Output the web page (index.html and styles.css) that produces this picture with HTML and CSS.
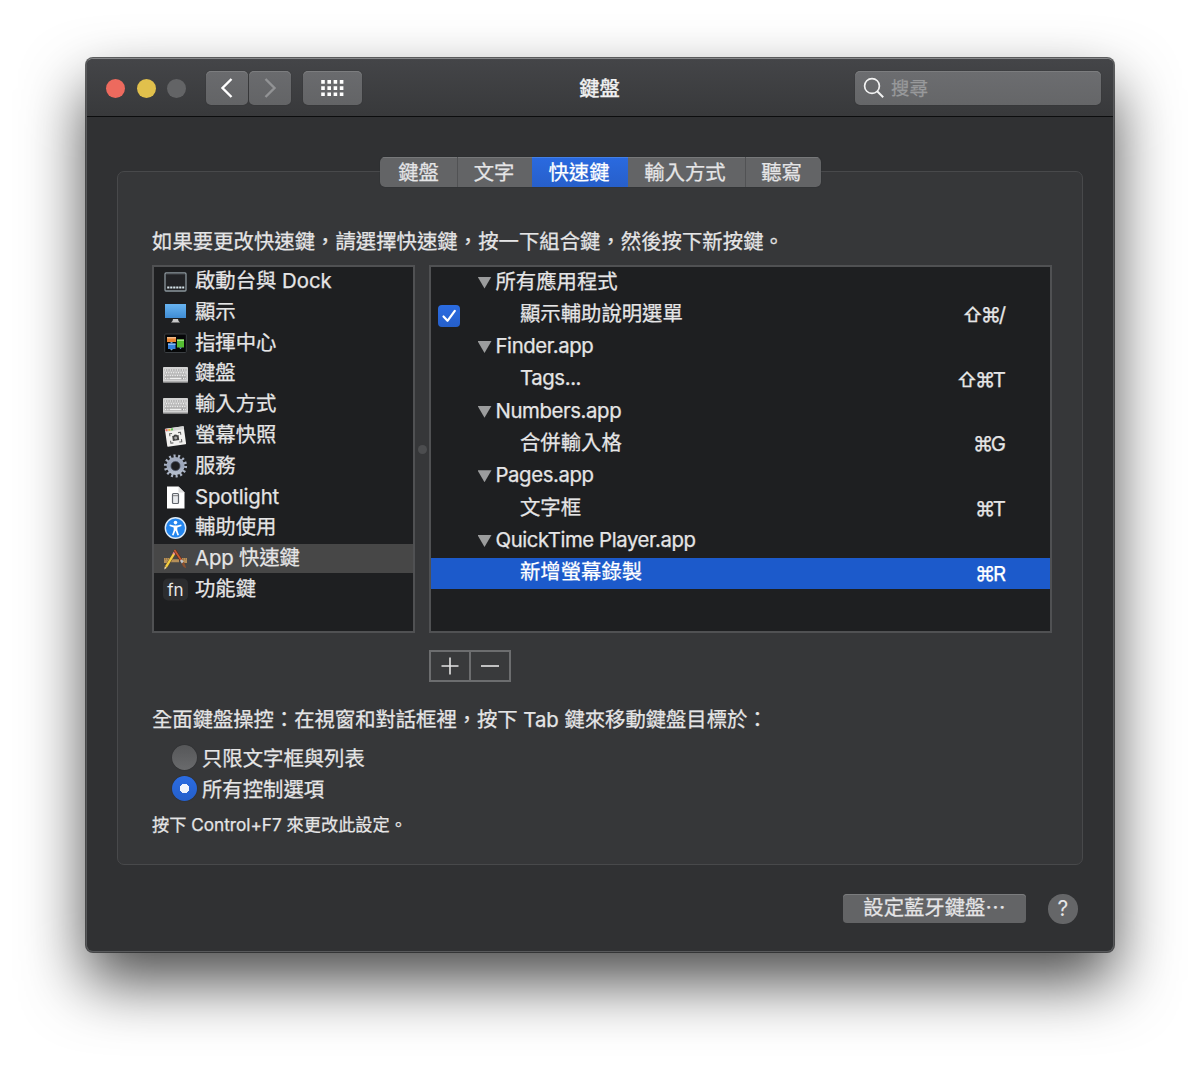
FILE: index.html
```html
<!DOCTYPE html>
<html lang="zh-Hant">
<head>
<meta charset="utf-8">
<title>鍵盤</title>
<link rel="stylesheet" href="styles.css">
</head>
<body>
<main class="window">
  <header class="titlebar">
    <div class="titlebar-left">
      <div class="lights"><span class="light red"></span><span class="light yellow"></span><span class="light off"></span></div>
      <div class="nav">
        <button class="tool" aria-label="返回"><svg width="42" height="34" viewBox="0 0 42 34"><path d="M25.500 8 16.500 17l9 9" fill="none" stroke="#fff" stroke-width="2.400"/></svg></button>
        <button class="tool" aria-label="往前"><svg width="42" height="34" viewBox="0 0 42 34"><path d="M16.500 8 25.500 17l-9 9" fill="none" stroke="#929395" stroke-width="2.400"/></svg></button>
      </div>
      <button class="tool tool-grid" aria-label="顯示全部"><svg width="59" height="34" viewBox="0 0 59 34" fill="none" stroke="#fff" stroke-width="3.600" stroke-dasharray="3.600 2.600"><path d="M18.200 10.900h22.300M18.200 17.100h22.300M18.200 23.200h22.300"/></svg></button>
    </div>
    <h1 class="title">鍵盤</h1>
    <div class="titlebar-right">
      <div class="search"><svg width="22" height="22" viewBox="0 0 22 22" fill="none" stroke="#f2f2f2" stroke-width="1.700"><circle cx="9" cy="9" r="7.400"/><path d="m14.200 14.200 6 6" stroke-width="2"/></svg><span>搜尋</span></div>
    </div>
  </header>

  <section class="content">
    <nav class="tabs">
      <span class="tab t1">鍵盤</span><span class="tab t2">文字</span><span class="tab t3 active">快速鍵</span><span class="tab t4">輸入方式</span><span class="tab t5">聽寫</span>
    </nav>
    <div class="panel">
      <p class="intro">如果要更改快速鍵，請選擇快速鍵，按一下組合鍵，然後按下新按鍵。</p>
      <div class="lists">
        <ul class="categories">
          <li><svg class="icon" viewBox="0 0 25 24"><rect x="2" y="3" width="21" height="18" rx="1" fill="#222326" stroke="#8b969c" stroke-width="1.300"/><path d="M3 4h19" stroke="#45494c"/><path d="M4.200 17.500h17" stroke="#d8e5ec" stroke-width="2.200" stroke-dasharray="2.200 .8"/></svg>啟動台與 Dock</li>
          <li><svg class="icon" viewBox="0 0 25 24"><defs><linearGradient id="screen" x2="0" y2="1"><stop stop-color="#68b4f1"/><stop offset="1" stop-color="#3f8cd4"/></linearGradient></defs><rect x="2" y="4" width="21" height="14" fill="url(#screen)"/><path d="M10 19h5l.5 2 1.500 1.500H8L9.500 21z" fill="#c8c8c8"/></svg>顯示</li>
          <li><svg class="icon" viewBox="0 0 25 24"><rect x="1.700" y="3" width="21.600" height="18.500" rx="1" fill="#060708" stroke="#3b3f43"/><path d="M4 6h9v5H4z" fill="#e98432"/><path d="M4 6h9v1.500H4z" fill="#f2bb87"/><path d="M14 8.500h7v8h-7z" fill="#55bd32"/><path d="M14 8.500h7V10h-7z" fill="#a1e481"/><path d="M5 12.500h7.500V18H5z" fill="#3581dc"/><path d="M5 12.500h7.500V14H5z" fill="#86b9f4"/><path d="M7 11l1.500 1.500L10 11zm0 7 1.500 1.500L10 18zm9-1.500 1.500 1.500 1.500-1.500z" fill="#79a9d1"/></svg>指揮中心</li>
          <li><svg class="icon" viewBox="0 0 25 24"><rect y="5" width="25" height="15.500" rx=".8" fill="#d3d3d3"/><path d="M0 20h25" stroke="#8a8a8a"/><path d="M1.700 8h21.600M2.500 10.800h20M1.700 13.600h21.600M1.700 16.400h21.600" stroke="#999" stroke-width="2.100"/><path d="M2 8h21M3 10.800h19.500M2 13.600h21M2 16.400h4m14 0h3" stroke="#f0f0f0" stroke-width="1.500" stroke-dasharray="1.100 .6"/><path d="M6.500 16.400h12" stroke="#f0f0f0" stroke-width="1.400"/></svg>鍵盤</li>
          <li><svg class="icon" viewBox="0 0 25 24"><rect y="5" width="25" height="15.500" rx=".8" fill="#d3d3d3"/><path d="M0 20h25" stroke="#8a8a8a"/><path d="M1.700 8h21.600M2.500 10.800h20M1.700 13.600h21.600M1.700 16.400h21.600" stroke="#999" stroke-width="2.100"/><path d="M2 8h21M3 10.800h19.500M2 13.600h21M2 16.400h4m14 0h3" stroke="#f0f0f0" stroke-width="1.500" stroke-dasharray="1.100 .6"/><path d="M6.500 16.400h12" stroke="#f0f0f0" stroke-width="1.400"/></svg>輸入方式</li>
          <li><svg class="icon" viewBox="0 0 25 24"><g transform="rotate(-8 12.500 12.500)"><rect x="3" y="3.500" width="19" height="18" rx=".7" fill="#f2f1ef"/><path d="M3 5h19" stroke="#d6d6d6" stroke-width="3"/><path d="M3.500 5h2" stroke="#ec6a5f" stroke-width="2"/><path d="M6.300 5h2" stroke="#e8bd45" stroke-width="2"/><path d="M9 5h2" stroke="#66c653" stroke-width="2"/><path d="M7 11.500V9h2.500m6 0H18v2.500m0 4.500v2.500h-2.500m-6 0H7V16" fill="none" stroke="#666" stroke-width="1.100"/><path d="M9.300 11.500h1.500l.7-1h2l.7 1h1.500v5H9.300z" fill="#444"/><circle cx="12.500" cy="13.900" r="1.500" fill="#aaa"/></g></svg>螢幕快照</li>
          <li><svg class="icon" viewBox="0 0 25 24"><defs><linearGradient id="steel" x2="0" y2="1"><stop stop-color="#a3acbf"/><stop offset=".5" stop-color="#98a3b8"/><stop offset="1" stop-color="#b3bccb"/></linearGradient></defs><circle cx="12.500" cy="12" r="9.800" fill="none" stroke="#aab3c4" stroke-width="3.600" stroke-dasharray="2 2.398"/><circle cx="12.500" cy="12" r="6.800" fill="none" stroke="url(#steel)" stroke-width="4.400"/><circle cx="12.500" cy="12" r="4.600" fill="#1e1f21" stroke="#5d6678" stroke-width=".8"/></svg>服務</li>
          <li><svg class="icon" viewBox="0 0 25 24"><path d="M4 1.500h11.500l6 6v16H4z" fill="#fff"/><path d="M15.500 1.500v6h6z" fill="#dedede"/><rect x="9.500" y="8.500" width="6" height="10" rx="1" fill="#e7e9ec" stroke="#62666d" stroke-width="1.200"/><path d="M10 10.700h5" stroke="#777" stroke-width=".9"/></svg><span class="label">Spotlight</span></li>
          <li><svg class="icon" viewBox="0 0 25 24"><circle cx="12.500" cy="12" r="10.200" fill="#2486ee" stroke="#dceaf8" stroke-width="1.400"/><circle cx="12.500" cy="6.600" r="1.800" fill="#fff"/><path d="m6.800 8.600 4.100 1h3.200l4.100-1 .4 1.500-4.300 1.400v2.600l1.700 4.900-1.500.5-2-4.900-2 4.900-1.500-.5 1.700-4.900v-2.600l-4.300-1.400z" fill="#fff"/></svg>輔助使用</li>
          <li class="selected"><svg class="icon" viewBox="0 0 25 24"><path d="M1 11h23v5H1z" fill="#b58f59"/><path d="M2 12h21" stroke="#765832" stroke-dasharray=".8 1.200"/><path d="M8.500 11h8l3 5h-14z" fill="#474747"/><path d="M9 12.200h7v3H8z" fill="#b58f59"/><path d="M2.300 21 12.200 5" stroke="#665020" stroke-width="3"/><path d="m3 19.800 8-13" stroke="#f5ce43" stroke-width="2.200"/><path d="m10.700 7.300 1.500-2.400" stroke="#e88b9a" stroke-width="2.700"/><path d="m1.300 22.500.5-3 2 1.300z" fill="#f4ddb2"/><path d="m11.500 3 7.500 11.500" stroke="#572816" stroke-width="3"/><path d="m11.500 3 7.500 11.500" stroke="#c65a32" stroke-width="1.800"/><path d="m18 13 1.900 2.900" stroke="#c1c8cb" stroke-width="2.500"/><path d="m18.800 16.300 2.200-1.500 2.200 6.200c-2 .2-4-2-4.400-4.700z" fill="#89502f"/></svg><span class="label">App 快速鍵</span></li>
          <li><svg class="icon" viewBox="0 0 25 24"><rect y="1.500" width="25" height="22" rx="5" fill="#2c2d2f"/><text class="fn" x="12.500" y="18.500" text-anchor="middle">fn</text></svg>功能鍵</li>
        </ul>
        <div class="splitter"><span></span></div>
        <div class="table">
          <div class="row group"><i class="tri"></i><span>所有應用程式</span></div>
          <div class="row"><span class="check"><svg width="22" height="22" viewBox="0 0 22 22"><path d="m5.500 11.500 4 4.300 7.300-10" fill="none" stroke="#fff" stroke-width="2.200" stroke-linecap="round" stroke-linejoin="round"/></svg></span><span class="name">顯示輔助說明選單</span><span class="keys">⇧⌘/</span></div>
          <div class="row group"><i class="tri"></i><span class="latin">Finder.app</span></div>
          <div class="row"><span class="name latin">Tags...</span><span class="keys">⇧⌘T</span></div>
          <div class="row group"><i class="tri"></i><span class="latin">Numbers.app</span></div>
          <div class="row"><span class="name">合併輸入格</span><span class="keys">⌘G</span></div>
          <div class="row group"><i class="tri"></i><span class="latin">Pages.app</span></div>
          <div class="row"><span class="name">文字框</span><span class="keys">⌘T</span></div>
          <div class="row group"><i class="tri"></i><span class="latin">QuickTime Player.app</span></div>
          <div class="row chosen"><span class="name">新增螢幕錄製</span><span class="keys">⌘R</span></div>
        </div>
      </div>
      <div class="edit">
        <button aria-label="加入"><svg width="20" height="20" viewBox="0 0 20 20"><path d="M1.500 10h17M10 1.500v17" stroke="#e4e4e4" stroke-width="1.600"/></svg></button>
        <button aria-label="移除"><svg width="20" height="20" viewBox="0 0 20 20"><path d="M1 10h18" stroke="#e4e4e4" stroke-width="1.600"/></svg></button>
      </div>
      <p class="access">全面鍵盤操控：在視窗和對話框裡，按下 Tab 鍵來移動鍵盤目標於：</p>
      <div class="radios">
        <label class="choice"><span class="radio"></span><span>只限文字框與列表</span></label>
        <label class="choice"><span class="radio on"></span><span>所有控制選項</span></label>
      </div>
      <p class="hint">按下 Control+F7 來更改此設定。</p>
    </div>
    <footer class="footer"><button class="bluetooth">設定藍牙鍵盤⋯</button><button class="help" aria-label="輔助說明">?</button></footer>
  </section>
</main>
</body>
</html>
```

FILE: styles.css
```css
* { box-sizing: border-box; }
body {
  margin: 0;
  padding: 58px 0 0 86px;
  width: 1200px;
  height: 1066px;
  overflow: hidden;
  background: #fff;
  color: #e5e5e6;
  font: 20.35px/30px Inter, "Noto Sans CJK TC", sans-serif;
  -webkit-text-stroke: .25px;
}
p, h1, ul { margin: 0; padding: 0; }
button { margin: 0; padding: 0; border: 0; color: inherit; font: inherit; }
svg { display: block; flex: none; }
.latin { letter-spacing: -.4px; }
.label { letter-spacing: -.15px; }

.window {
  width: 1028px;
  height: 894px;
  border: 1px solid #58595b;
  border-top-color: #87888a;
  border-radius: 7px;
  overflow: hidden;
  background: #303133;
  box-shadow: 0 0 0 1px rgba(30, 31, 33, .7), 0 30px 62px rgba(0, 0, 0, .7);
}

.titlebar {
  display: grid;
  grid-template-columns: 1fr auto 1fr;
  align-items: center;
  height: 58px;
  padding: 1px 12px 0 19px;
  border-bottom: 1px solid #0c0d0e;
  background: linear-gradient(#444548, #38393b);
}
.titlebar-left { display: flex; align-items: center; }
.lights { display: flex; gap: 11.7px; margin-right: 20px; }
.light { width: 19px; height: 19px; border-radius: 50%; }
.red { background: #ed6a5e; }
.yellow { background: #e1c04c; }
.off { background: #636466; }
.nav { display: flex; gap: 1px; margin-right: 12px; }
.tool {
  width: 42px;
  height: 34px;
  border-radius: 5px;
  background: linear-gradient(#6a6b6e, #636466);
  box-shadow: inset 0 1px #7c7d7f, 0 0 1px #222;
}
.tool-grid { width: 59px; }
.title { margin: 2px 0 0 -8px; font-size: 20.35px; font-weight: 500; line-height: 30px; color: #f0f0f0; }
.titlebar-right { display: flex; justify-content: flex-end; }
.search {
  display: flex;
  align-items: center;
  width: 246px;
  height: 34px;
  padding-left: 8px;
  gap: 6px;
  border-radius: 5px;
  background: linear-gradient(#6c6d70, #656668);
  box-shadow: inset 0 1px #7c7d7f, 0 0 1px #222;
  color: #98999b;
  font-size: 18.5px;
}

.content { display: flex; flex-direction: column; padding: 40px 30px 0; }
.tabs {
  position: relative;
  align-self: center;
  display: flex;
  width: 441px;
  height: 30px;
  margin-left: 1px;
  border-radius: 5px;
  overflow: hidden;
  background: #636466;
  box-shadow: 0 0 1px #1d1e20;
}
.tab { border-right: 1px solid #515254; text-align: center; box-shadow: inset 0 1px #77787a; line-height: 31px; }
.t1 { width: 78px; }
.t2 { width: 74px; padding-right: 2px; border-right: 0; }
.t3 { width: 96px; padding-right: 2px; border-right: 0; }
.t4 { width: 118px; padding-right: 3px; }
.t5 { width: 75px; padding-right: 4px; border-right: 0; }
.tab.active { background: linear-gradient(#2a6ae0, #275fca); box-shadow: inset 0 1px #4480e6; color: #fff; }

.panel {
  height: 694px;
  margin-top: -16px;
  padding: 55px 30px 0 34px;
  border: 1px solid #48494b;
  border-radius: 7px;
  background: #363739;
}
.intro { letter-spacing: .04px; }
.lists { display: flex; height: 368px; margin-top: 8px; }
.categories {
  width: 263px;
  border: 2px solid #505153;
  background: #1e1f21;
  list-style: none;
}
.categories li {
  display: flex;
  align-items: center;
  gap: 7px;
  height: 29.2px;
  margin-bottom: 1.6px;
  padding: 0 0 2px 9px;
  line-height: 27px;
}
.categories .selected { background: #474747; }
.icon { width: 25px; height: 24px; position: relative; top: 1px; }
.fn { fill: #e8e8e8; font-size: 17px; }
.splitter { display: flex; align-items: center; justify-content: center; width: 14px; }
.splitter span { width: 9px; height: 9px; border-radius: 50%; background: #4c4d4f; }
.table { width: 623px; border: 2px solid #505153; background: #1e1f21; }
.row {
  display: grid;
  grid-template-columns: 89px 1fr auto;
  align-items: center;
  height: 31px;
  margin-bottom: 1.3px;
  padding: 0 44px 2px 0;
  line-height: 24px;
}
.row.group { grid-template-columns: 18px 1fr; padding: 0 0 2px 46.5px; }
.tri { width: 14px; height: 12px; margin-top: 2px; background: #9b9c9d; clip-path: polygon(0 0, 100% 0, 50% 100%); }
.name { grid-column: 2; }
.keys { grid-column: 3; margin: 3px 2.5px 0 0; letter-spacing: -2.5px; }
.chosen { background: #1c5acb; color: #fff; }
.check {
  width: 22px;
  height: 22px;
  margin: 5px 0 0 7px;
  border-radius: 4px;
  background: linear-gradient(#2b6ce2, #255fca);
}

.edit { display: flex; width: 82px; height: 32px; margin: 17px 0 0 277px; border: 2px solid #6c6d6f; }
.edit button { display: grid; place-items: center; flex: 1; background: #393a3c; }
.edit button + button { border-left: 2px solid #6c6d6f; }
.access { margin-top: 23px; letter-spacing: -.03px; }
.radios { margin: 7px 0 0 20px; }
.choice { display: flex; align-items: center; gap: 5px; height: 31px; }
.choice span + span { padding-top: 2px; }
.radio {
  width: 25px;
  height: 25px;
  border-radius: 50%;
  background: linear-gradient(#565759, #696a6c);
  box-shadow: 0 0 1px #1d1e20;
}
.radio.on { background: radial-gradient(circle, #f1f4fb 4.5px, transparent 5px), linear-gradient(#2b6ce2, #255fca); }
.hint { margin-top: 8px; font-size: 17.2px; line-height: 26px; }

.footer { display: flex; justify-content: flex-end; gap: 22px; margin-top: 29px; padding-right: 5.5px; }
.bluetooth {
  width: 183px;
  height: 29px;
  border-radius: 4px;
  background: #636466;
  box-shadow: inset 0 1px #7b7c7e;
  font-family: "Noto Sans CJK TC", sans-serif;
  line-height: 25px;
  padding-bottom: 4px;
}
.help { width: 29.5px; height: 29.5px; border-radius: 50%; background: #656668; font-size: 21px; line-height: 29px; -webkit-text-stroke: 0; }
```
